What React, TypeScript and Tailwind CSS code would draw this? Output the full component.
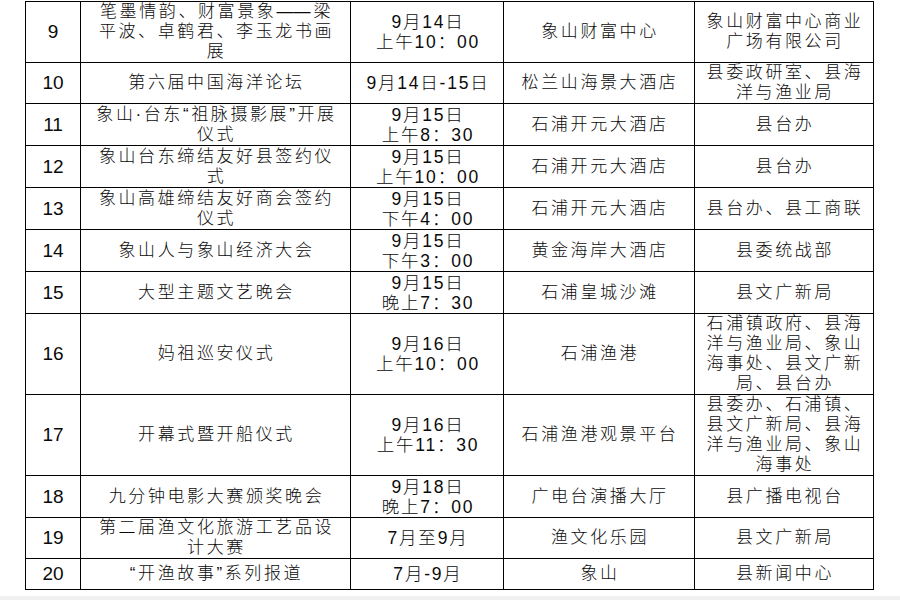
import React from "react";

type Row = {
  n: string;
  h: number;
  ev: string[];
  tm: string[];
  loc: string[];
  org: string[];
};

const rows: Row[] = [
  { n: "9", h: 61, ev: ["笔墨情韵、财富景象——梁", "平波、卓鹤君、李玉龙书画", "展"], tm: ["9月14日", "上午10：00"], loc: ["象山财富中心"], org: ["象山财富中心商业", "广场有限公司"] },
  { n: "10", h: 41, ev: ["第六届中国海洋论坛"], tm: ["9月14日-15日"], loc: ["松兰山海景大酒店"], org: ["县委政研室、县海", "洋与渔业局"] },
  { n: "11", h: 42, ev: ["象山·台东“祖脉摄影展”开展", "仪式"], tm: ["9月15日", "上午8：30"], loc: ["石浦开元大酒店"], org: ["县台办"] },
  { n: "12", h: 42, ev: ["象山台东缔结友好县签约仪", "式"], tm: ["9月15日", "上午10：00"], loc: ["石浦开元大酒店"], org: ["县台办"] },
  { n: "13", h: 42, ev: ["象山高雄缔结友好商会签约", "仪式"], tm: ["9月15日", "下午4：00"], loc: ["石浦开元大酒店"], org: ["县台办、县工商联"] },
  { n: "14", h: 42, ev: ["象山人与象山经济大会"], tm: ["9月15日", "下午3：00"], loc: ["黄金海岸大酒店"], org: ["县委统战部"] },
  { n: "15", h: 42, ev: ["大型主题文艺晚会"], tm: ["9月15日", "晚上7：30"], loc: ["石浦皇城沙滩"], org: ["县文广新局"] },
  { n: "16", h: 81, ev: ["妈祖巡安仪式"], tm: ["9月16日", "上午10：00"], loc: ["石浦渔港"], org: ["石浦镇政府、县海", "洋与渔业局、象山", "海事处、县文广新", "局、县台办"] },
  { n: "17", h: 81, ev: ["开幕式暨开船仪式"], tm: ["9月16日", "上午11：30"], loc: ["石浦渔港观景平台"], org: ["县委办、石浦镇、", "县文广新局、县海", "洋与渔业局、象山", "海事处"] },
  { n: "18", h: 42, ev: ["九分钟电影大赛颁奖晚会"], tm: ["9月18日", "晚上7：00"], loc: ["广电台演播大厅"], org: ["县广播电视台"] },
  { n: "19", h: 41, ev: ["第二届渔文化旅游工艺品设", "计大赛"], tm: ["7月至9月"], loc: ["渔文化乐园"], org: ["县文广新局"] },
  { n: "20", h: 31, ev: ["“开渔故事”系列报道"], tm: ["7月-9月"], loc: ["象山"], org: ["县新闻中心"] },
];

function renderLine(s: string) {
  if (s.includes("——")) {
    const [a, b] = s.split("——");
    return (
      <>
        {a}
        <span className="tracking-normal">——</span>
        <span className="ml-[3px]">{b}</span>
      </>
    );
  }
  return s;
}

function Lines({ lines, cls }: { lines: string[]; cls: string }) {
  return (
    <div className={cls}>
      {lines.map((l, i) => (
        <div key={i} className="whitespace-nowrap">
          {renderLine(l)}
        </div>
      ))}
    </div>
  );
}

export default function App() {
  return (
    <div
      className="w-[900px] h-[600px] bg-white relative overflow-hidden text-[#0a0a0a]"
      style={{ fontFamily: '"Liberation Sans", "Noto Sans CJK SC", sans-serif' }}
    >
      <div className="pt-px pl-[25px]">
        <table className="border-collapse table-fixed w-[848px]">
          <colgroup>
            <col className="w-[55px]" />
            <col className="w-[270px]" />
            <col className="w-[153px]" />
            <col className="w-[191px]" />
            <col className="w-[179px]" />
          </colgroup>
          <tbody>
            {rows.map((r) => (
              <tr key={r.n} style={{ height: r.h }}>
                <td className="border border-black p-0 text-center align-middle text-[19px] leading-[20px]">
                  {r.n}
                </td>
                <td className="border border-black p-0 text-center align-middle">
                  <Lines lines={r.ev} cls="text-[17px] leading-[20px] tracking-[2.6px] font-light pl-[2px]" />
                </td>
                <td className="border border-black p-0 text-center align-middle">
                  <Lines lines={r.tm} cls="text-[17.5px] leading-[20px] tracking-[1.8px] font-light pl-[2px]" />
                </td>
                <td className="border border-black p-0 text-center align-middle">
                  <Lines lines={r.loc} cls="text-[17px] leading-[20px] tracking-[2.6px] font-light pl-[2px]" />
                </td>
                <td className="border border-black p-0 text-center align-middle">
                  <Lines lines={r.org} cls="text-[17px] leading-[20px] tracking-[2.6px] font-light pl-[2px]" />
                </td>
              </tr>
            ))}
          </tbody>
        </table>
      </div>
      <div className="absolute left-0 right-0 bottom-0 h-[4px] bg-[#f0f0f0]" />
    </div>
  );
}
